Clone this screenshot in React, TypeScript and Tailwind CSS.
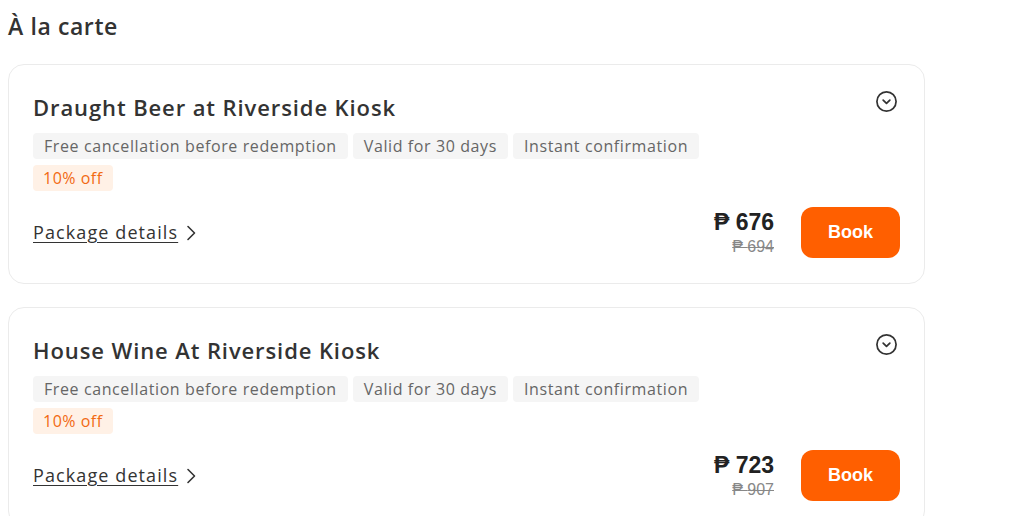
type Pkg = {
  title: string;
  price: string;
  original: string;
};

const packages: Pkg[] = [
  { title: "Draught Beer at Riverside Kiosk", price: "676", original: "694" },
  { title: "House Wine At Riverside Kiosk", price: "723", original: "907" },
];

const tags = ["Free cancellation before redemption", "Valid for 30 days", "Instant confirmation"];

const ChevronCircle = () => (
  <svg width="23" height="23" viewBox="0 0 24 24" fill="none" stroke="#333" strokeWidth="1.8" strokeLinecap="round" strokeLinejoin="round">
    <circle cx="12" cy="12" r="10" />
    <path d="M8.5 10.5 12 14l3.5-3.5" />
  </svg>
);

const ChevronRight = () => (
  <svg width="14" height="18" viewBox="0 0 14 18" fill="none" stroke="#333" strokeWidth="1.6" strokeLinecap="round" strokeLinejoin="round">
    <path d="M4 2.5 10.5 9 4 15.5" />
  </svg>
);

const PackageCard = ({ pkg }: { pkg: Pkg }) => (
  <div className="relative w-[917px] rounded-2xl border border-[#ebebeb] bg-white px-6 pt-[27px] pb-[25px]">
    {/* TOGGLE */}
    <div className="absolute right-[26px] top-[25px]">
      <ChevronCircle />
    </div>
    <h3 className="text-[22px] leading-[30px] font-semibold text-[#333] tracking-[0.9px]">{pkg.title}</h3>
    {/* TAGS */}
    <div className="mt-[11px] flex flex-wrap gap-x-[5px] gap-y-[6px] w-[690px]">
      {tags.map((t) => (
        <span key={t} className="h-[26px] leading-[26px] rounded bg-[#f5f5f5] px-[11px] text-[16px] tracking-[0.6px] text-[#666]">
          {t}
        </span>
      ))}
      <span className="h-[26px] leading-[26px] rounded bg-[#fff1e6] px-[10px] text-[16px] tracking-[0.5px] text-[#f26a12]">10% off</span>
    </div>
    {/* BOTTOM ROW */}
    <div className="mt-4 flex items-center justify-between">
      <a className="flex items-center gap-[6px] text-[18px] tracking-[1.1px] text-[#333] cursor-pointer">
        <span className="underline underline-offset-[3px]">Package details</span>
        <ChevronRight />
      </a>
      <div className="flex items-center gap-[27px]">
        <div className="flex flex-col items-end font-['Liberation_Sans',Arial,sans-serif]">
          <span className="text-[23px] leading-[28px] font-bold text-[#222]">₱ {pkg.price}</span>
          <span className="text-[16px] leading-[22px] text-[#888] line-through">₱ {pkg.original}</span>
        </div>
        <button className="h-[51px] w-[99px] rounded-xl bg-[#ff5f00] text-[18px] font-bold text-white font-['Liberation_Sans',Arial,sans-serif]">
          Book
        </button>
      </div>
    </div>
  </div>
);

const App = () => {
  return (
    <div className="min-h-screen bg-white pl-2 font-['Open_Sans',sans-serif]">
      <h2 className="pt-[10px] text-[23px] leading-[32px] font-semibold tracking-[0.6px] text-[#333]">À la carte</h2>
      <div className="mt-[22px] flex flex-col gap-[23px]">
        {packages.map((p) => (
          <PackageCard key={p.title} pkg={p} />
        ))}
      </div>
    </div>
  );
};

export default App;
